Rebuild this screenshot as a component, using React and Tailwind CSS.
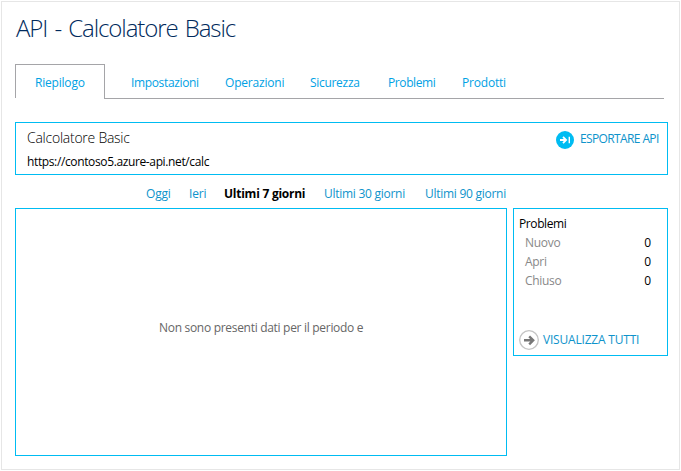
const tabs = [
  { label: 'Impostazioni', cls: 'ml-[26px] w-[94px] tracking-[-0.35px]' },
  { label: 'Operazioni', cls: 'w-[85px]' },
  { label: 'Sicurezza', cls: 'w-[78px] tracking-[-0.3px]' },
  { label: 'Problemi', cls: 'w-[74px] tracking-[-0.4px]' },
  { label: 'Prodotti', cls: 'w-[60px]' },
];

const ranges = [
  { label: 'Oggi', cls: 'w-[43px] text-[#0e93cb]' },
  { label: 'Ieri', cls: 'w-[35px] text-[#0e93cb]' },
  { label: 'Ultimi 7 giorni', cls: 'w-[100px] font-bold text-black tracking-[-0.25px]' },
  { label: 'Ultimi 30 giorni', cls: 'w-[101px] text-[#0e93cb] tracking-[-0.27px]' },
  { label: 'Ultimi 90 giorni', cls: 'w-[90px] text-[#0e93cb] tracking-[-0.27px]' },
];

const issues = [
  { label: 'Nuovo', count: 0 },
  { label: 'Apri', count: 0 },
  { label: 'Chiuso', count: 0 },
];

function ExportIcon() {
  return (
    <svg className="h-[18px] w-[18px] shrink-0" viewBox="0 0 18 18" fill="none">
      <circle cx="9" cy="9" r="9" fill="#00bcf2" />
      <path d="M4 9h5.8M7 5.9L10.1 9 7 12.1" stroke="#fff" strokeWidth="1.8" />
      <path d="M13.3 5.8v6.4" stroke="#fff" strokeWidth="1.4" />
    </svg>
  );
}

function ArrowIcon() {
  return (
    <svg className="h-5 w-5 shrink-0" viewBox="0 0 20 20" fill="none">
      <circle cx="10" cy="10" r="9.3" stroke="#c4c4c4" strokeWidth="1.3" />
      <path d="M5 10.3h9M10.2 6.3l4 4-4 4" stroke="#777" strokeWidth="2.4" />
    </svg>
  );
}

export default function App() {
  return (
    <div className="h-[471px] w-[681px] overflow-hidden bg-white pt-px pl-px font-['Open_Sans','Noto_Sans',sans-serif] text-[12px] leading-4 tracking-[-0.2px] whitespace-nowrap">
      <div className="h-[469px] w-[679px] border border-[#e6e6e6] pl-[13px]">
        <h1 className="h-[62px] pt-[10px] pl-px text-[24px] leading-8 font-light tracking-[-1.08px] [word-spacing:2px] text-[#002a5c]">
          API - Calcolatore Basic
        </h1>
        <nav className="flex h-[35px] w-[649px] text-[#00a1e4]">
          <div className="h-[34px] w-[90px] border-t border-l border-[#a5a5a8] pt-[10px] pl-[19px]">
            Riepilogo
          </div>
          <div className="-ml-px flex flex-1 border-b border-l border-[#a5a5a8] pt-[11px]">
            {tabs.map((t) => (
              <div key={t.label} className={t.cls}>{t.label}</div>
            ))}
          </div>
        </nav>

        <section className="mt-[23px] flex h-[53px] w-[653px] justify-between border border-[#00bcf2] pl-[11px]">
          <div>
            <h2 className="mt-[5px] text-[14px] leading-5 font-light tracking-[-0.25px] text-black">Calcolatore Basic</h2>
            <p className="mt-[6px] tracking-[-0.37px] text-black">https://contoso5.azure-api.net/calc</p>
          </div>
          <div className="mt-2 flex h-[18px] w-[111px]">
            <ExportIcon />
            <span className="ml-[6px] tracking-[-0.62px] text-[#0e93cb]">ESPORTARE API</span>
          </div>
        </section>

        <div className="flex h-[33px] pt-[11px] pl-[131px]">
          {ranges.map((r) => (
            <div key={r.label} className={'shrink-0 ' + r.cls}>{r.label}</div>
          ))}
        </div>

        <div className="flex items-start gap-[6px]">
          <section className="h-[248px] w-[492px] border border-[#00bcf2] pt-[111px] pl-[143px] tracking-[-0.3px] text-[#666]">
            Non sono presenti dati per il periodo e
          </section>
          <aside className="h-[148px] w-[155px] border border-[#00bcf2] pl-[5px]">
            <h3 className="mt-[7px] tracking-[-0.4px] text-black">Problemi</h3>
            <div className="mt-px pr-4 pl-[6px]">
              {issues.map((i) => (
                <div key={i.label} className="flex h-[19px] items-center justify-between">
                  <span className="tracking-[-0.3px] text-[#888]">{i.label}</span>
                  <span className="text-black">{i.count}</span>
                </div>
              ))}
            </div>
            <div className="mt-[40px] flex">
              <ArrowIcon />
              <span className="ml-1 mt-[2px] text-[#0e93cb]">VISUALIZZA TUTTI</span>
            </div>
          </aside>
        </div>
      </div>
    </div>
  );
}
